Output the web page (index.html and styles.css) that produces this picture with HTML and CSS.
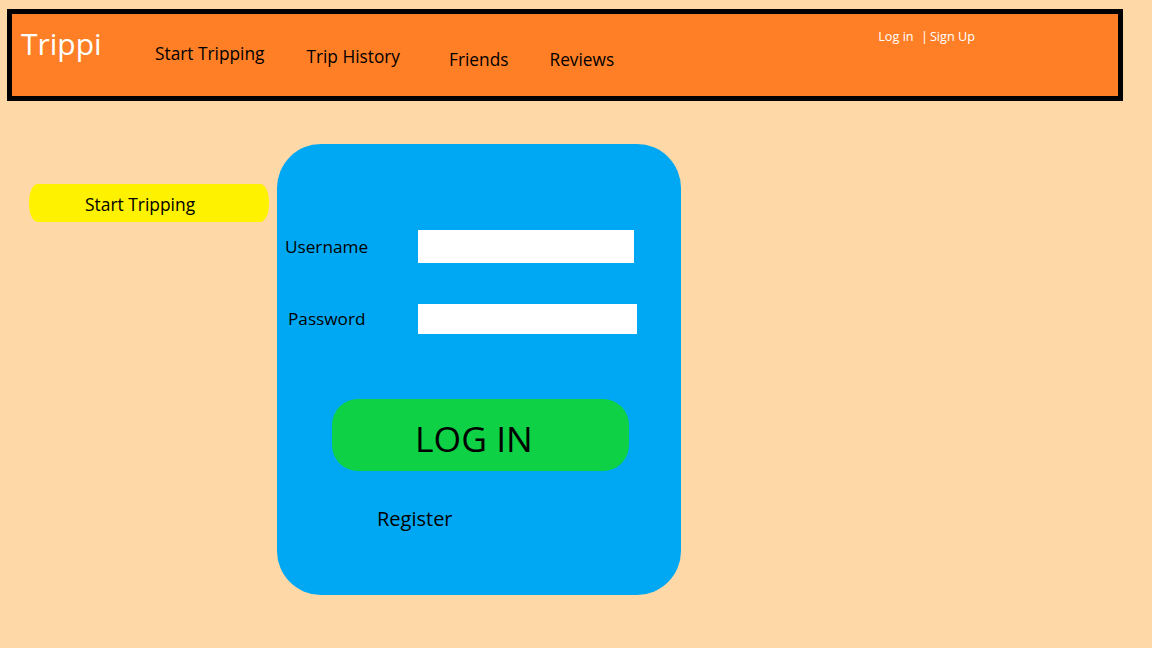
FILE: index.html
```html
<!DOCTYPE html>
<html lang="en">
<head>
<meta charset="utf-8">
<title>Trippi</title>
<link rel="stylesheet" href="styles.css">
</head>
<body>
<header class="topbar">
  <div class="logo">Trippi</div>
  <nav class="nav">
    <a class="nav-item nav-start">Start Tripping</a>
    <a class="nav-item nav-history">Trip History</a>
    <a class="nav-item nav-friends">Friends</a>
    <a class="nav-item nav-reviews">Reviews</a>
  </nav>
  <div class="auth"><a>Log in</a> <span class="sep">|</span><a>Sign Up</a></div>
</header>
<main class="main">
  <a class="start-btn">Start Tripping</a>
  <section class="card">
    <div class="form">
      <label class="label label-user">Username</label>
      <div class="field field-user"></div>
      <label class="label label-pass">Password</label>
      <div class="field field-pass"></div>
    </div>
    <button class="login-btn">LOG IN</button>
    <a class="register">Register</a>
  </section>
</main>
</body>
</html>
```

FILE: styles.css
```css
* { box-sizing: border-box; }
html, body { margin: 0; padding: 0; }
body {
  background: #fed8a6;
  font-family: "Open Sans", "Noto Sans", sans-serif;
  color: #000;
  width: 1152px;
  height: 648px;
  overflow: hidden;
}
.topbar {
  margin: 9px 0 0 7px;
  width: 1116px;
  height: 92px;
  border: 5px solid #000;
  background: #ff7f27;
  display: flex;
  align-items: flex-start;
  padding-left: 9px;
}
.logo {
  color: #fff;
  font-size: 30px;
  line-height: 1;
  margin-top: 15px;
  width: 134px;
}
.nav {
  display: flex;
  align-items: flex-start;
}
.nav-item {
  font-size: 17.3px;
  line-height: 1;
  white-space: nowrap;
}
.nav-start { margin-top: 31px; }
.nav-history { margin-top: 34px; margin-left: 42px; }
.nav-friends { margin-top: 37px; margin-left: 49px; }
.nav-reviews { margin-top: 37px; margin-left: 41px; }
.auth {
  color: #fff;
  font-size: 12.7px;
  line-height: 1;
  margin-top: 16px;
  margin-left: 264px;
  white-space: nowrap;
}
.auth .sep { margin: 0 2px 0 4px; }

.main {
  display: flex;
  align-items: flex-start;
  padding: 43px 0 0 29px;
}
.start-btn {
  width: 240px;
  height: 38px;
  margin-top: 40px;
  background: #fff200;
  border-radius: 9px / 17px;
  font-size: 17.4px;
  line-height: 40px;
  padding-left: 56px;
  white-space: nowrap;
}
.card {
  margin-left: 8px;
  width: 404px;
  height: 451px;
  background: #00a8f3;
  border-radius: 44px;
  padding-top: 86px;
  display: flex;
  flex-direction: column;
  align-items: flex-start;
}
.form {
  display: grid;
  grid-template-columns: 141px auto;
  row-gap: 41px;
  align-items: center;
}
.label {
  font-size: 17.2px;
  line-height: 1;
  padding-left: 8px;
}
.label-pass { padding-left: 11px; }
.field { background: #fff; }
.field-user { width: 216px; height: 33px; }
.field-pass { width: 219px; height: 30px; }
.login-btn {
  margin: 65px 0 0 55px;
  width: 297px;
  height: 72px;
  border: 0;
  border-radius: 26px;
  background: #0ed145;
  font-family: inherit;
  font-size: 35.5px;
  color: #000;
  text-align: left;
  padding: 6px 0 0 83px;
  line-height: 66px;
}
.register {
  margin: 38px 0 0 100px;
  font-size: 20px;
  line-height: 1;
}
```
